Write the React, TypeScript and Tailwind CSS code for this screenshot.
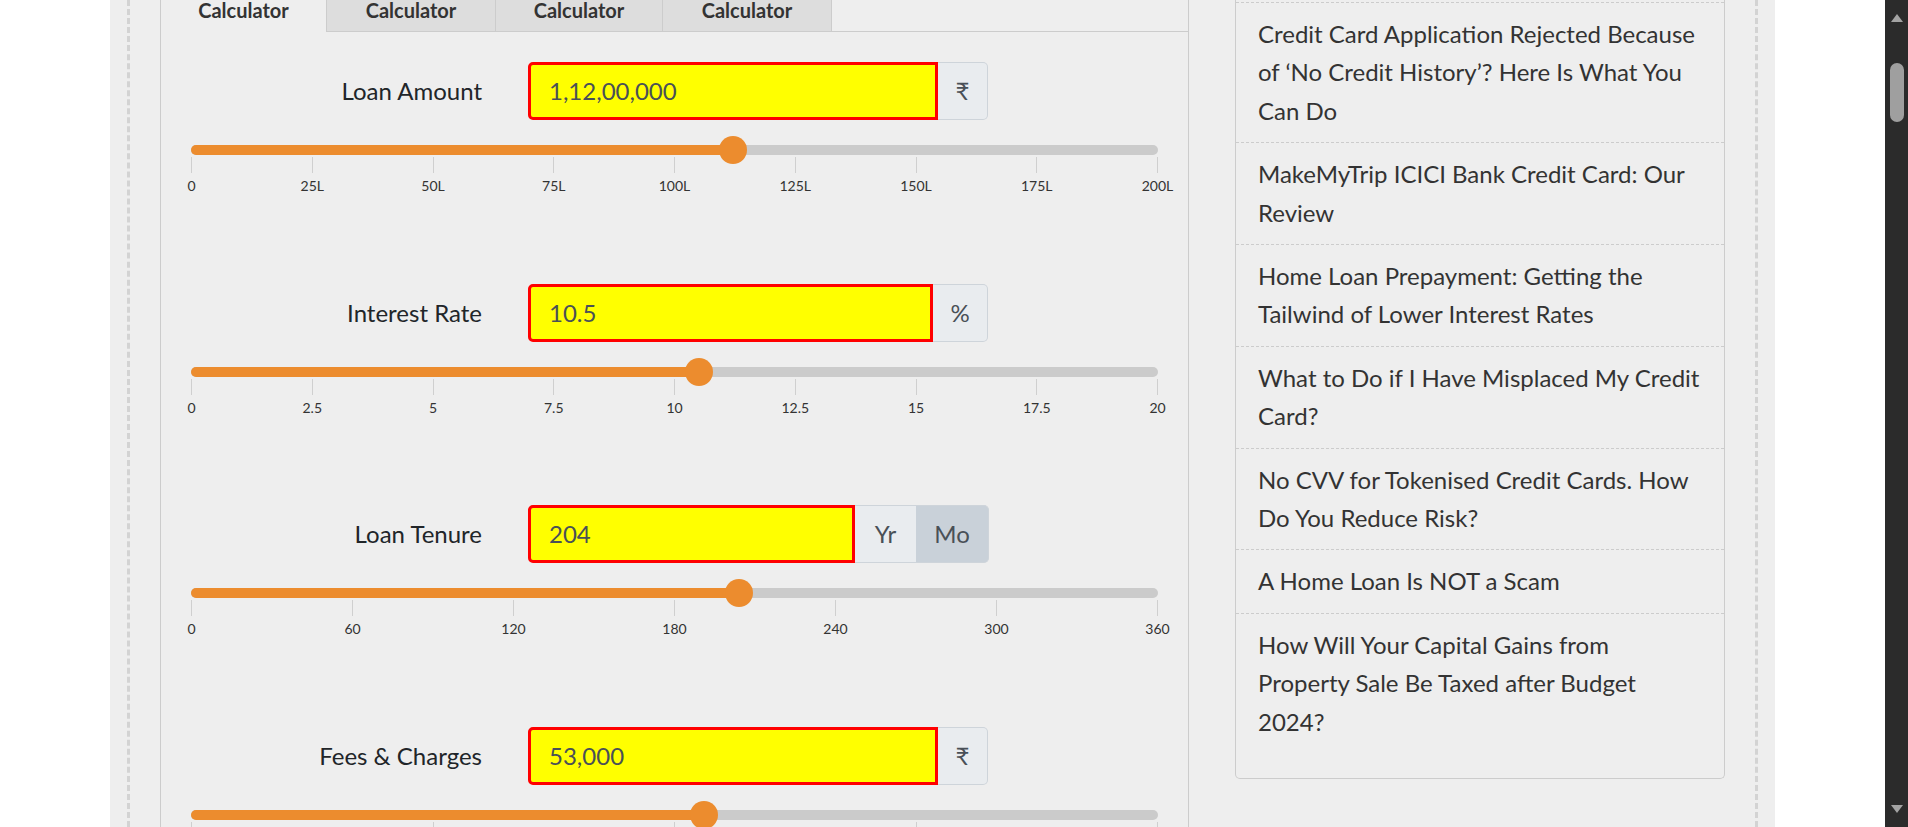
import React from 'react';

// 滑块行数据
type Row = {
  label: string;
  value: string;
  pct: number;
  ticks: string[];
  yellowW: number;
  addons: { text: string; w: number; active?: boolean }[];
};

const rows: Row[] = [
  {
    label: 'Loan Amount',
    value: '1,12,00,000',
    pct: 56,
    ticks: ['0', '25L', '50L', '75L', '100L', '125L', '150L', '175L', '200L'],
    yellowW: 410,
    addons: [{ text: '₹', w: 50 }],
  },
  {
    label: 'Interest Rate',
    value: '10.5',
    pct: 52.5,
    ticks: ['0', '2.5', '5', '7.5', '10', '12.5', '15', '17.5', '20'],
    yellowW: 405,
    addons: [{ text: '%', w: 55 }],
  },
  {
    label: 'Loan Tenure',
    value: '204',
    pct: 56.67,
    ticks: ['0', '60', '120', '180', '240', '300', '360'],
    yellowW: 327,
    addons: [
      { text: 'Yr', w: 61 },
      { text: 'Mo', w: 73, active: true },
    ],
  },
  {
    label: 'Fees & Charges',
    value: '53,000',
    pct: 53,
    ticks: ['0', '25K', '50K', '75K', '100K'],
    yellowW: 410,
    addons: [{ text: '₹', w: 50 }],
  },
];

const posts = [
  "Credit Card Application Rejected Because of ‘No Credit History’? Here Is What You Can Do",
  'MakeMyTrip ICICI Bank Credit Card: Our Review',
  'Home Loan Prepayment: Getting the Tailwind of Lower Interest Rates',
  'What to Do if I Have Misplaced My Credit Card?',
  'No CVV for Tokenised Credit Cards. How Do You Reduce Risk?',
  'A Home Loan Is NOT a Scam',
  'How Will Your Capital Gains from Property Sale Be Taxed after Budget 2024?',
];

const SliderRow: React.FC<{ row: Row }> = ({ row }) => (
  <div className="h-[221.7px]">
    <div className="flex h-[58px] items-center">
      <div className="w-[291px] text-right text-[24px] text-[#212529]">{row.label}</div>
      <div className="ml-[46px] flex h-[58px]">
        <div
          className="flex items-center rounded-l-[5px] border-[3px] border-[#ff0000] bg-[#ffff00] pl-[18px] text-[24px] text-[#495057]"
          style={{ width: row.yellowW }}
        >
          {row.value}
        </div>
        {row.addons.map((a, i) => (
          <div
            key={a.text}
            className={`flex items-center justify-center border-y border-[#ced4da] text-[24px] text-[#495057] ${
              a.active ? 'bg-[#c9d1d9]' : 'bg-[#e9ecef]'
            } ${i === row.addons.length - 1 ? 'rounded-r-[5px] border-r' : ''}`}
            style={{ width: a.w }}
          >
            {a.text}
          </div>
        ))}
      </div>
    </div>

    {/* 滑块 */}
    <div className="relative mt-[25px] h-[10px] rounded-full bg-[#cbcbcb]">
      <div className="h-full rounded-full bg-[#ec8c2e]" style={{ width: `${row.pct}%` }} />
      <div
        className="absolute top-[-9px] h-[28px] w-[28px] -translate-x-1/2 rounded-full bg-[#ec8c2e]"
        style={{ left: `${row.pct}%` }}
      />
    </div>
    <div className="mt-[2px] flex justify-between">
      {row.ticks.map((t) => (
        <div key={t} className="flex w-px flex-col items-center">
          <div className="h-[16px] w-px bg-[#cfcfcf]" />
          <div className="mt-[4px] whitespace-nowrap text-[14px] leading-[17px] text-[#333]">{t}</div>
        </div>
      ))}
    </div>
  </div>
);

const App: React.FC = () => {
  return (
    <div className="flex h-[827px] w-full overflow-hidden bg-white font-['Lato','Liberation_Sans','DejaVu_Sans',sans-serif]">
      <div className="relative h-[827px] min-w-0 flex-1 overflow-hidden">
        <div className="ml-[110px] h-[827px] w-[1665px] bg-[#eeeeee] px-[17px]">
          <div className="h-[827px] overflow-hidden border-x-[3px] border-dashed border-[#d3d3d3]">
            <div className="-mt-[16px] flex pl-[30px]">
              {/* 计算器面板 */}
              <div className="w-[1029px]">
                <div className="flex h-[48px] text-[20px] font-bold text-[#333]">
                  <div className="flex w-[167px] items-center justify-center border-x border-[#cccccc] bg-[#eeeeee] pt-[4px]">
                    Calculator
                  </div>
                  <div className="flex w-[169px] items-center justify-center border-b border-r border-[#cccccc] bg-[#dddddd] pt-[4px]">
                    Calculator
                  </div>
                  <div className="flex w-[167px] items-center justify-center border-b border-r border-[#cccccc] bg-[#dddddd] pt-[4px]">
                    Calculator
                  </div>
                  <div className="flex w-[169px] items-center justify-center border-b border-r border-[#cccccc] bg-[#dddddd] pt-[4px]">
                    Calculator
                  </div>
                  <div className="flex-1 border-b border-r border-[#cccccc]" />
                </div>
                <div className="h-[900px] border-x border-[#cccccc] px-[30px] pt-[30px]">
                  {rows.map((r) => (
                    <SliderRow key={r.label} row={r} />
                  ))}
                </div>
              </div>

              {/* 文章列表 */}
              <div className="ml-[46px] w-[490px]">
                <div className="rounded-b-[5px] border-x border-b border-[#cccccc] bg-[#eeeeee] pb-[25px]">
                  <div className="h-[19px] border-b border-dashed border-[#cccccc]" />
                  {posts.map((p, i) => (
                    <div
                      key={p}
                      className={`px-[22px] py-[12px] text-[24px] leading-[38.4px] text-[#333] ${
                        i < posts.length - 1 ? 'border-b border-dashed border-[#cccccc]' : ''
                      }`}
                    >
                      {p}
                    </div>
                  ))}
                </div>
              </div>
            </div>
          </div>
        </div>
      </div>

      {/* 滚动条 */}
      <div className="flex h-[827px] w-[23px] flex-col items-center bg-[#2b2b2b]">
        <div className="mt-[14px] h-0 w-0 border-x-[6px] border-b-[8px] border-x-transparent border-b-[#a3a3a3]" />
        <div className="mt-[41px] h-[59px] w-[14px] rounded-full bg-[#9f9f9f]" />
        <div className="flex-1" />
        <div className="mb-[14px] h-0 w-0 border-x-[6px] border-t-[8px] border-x-transparent border-t-[#a3a3a3]" />
      </div>
    </div>
  );
};

export default App;
